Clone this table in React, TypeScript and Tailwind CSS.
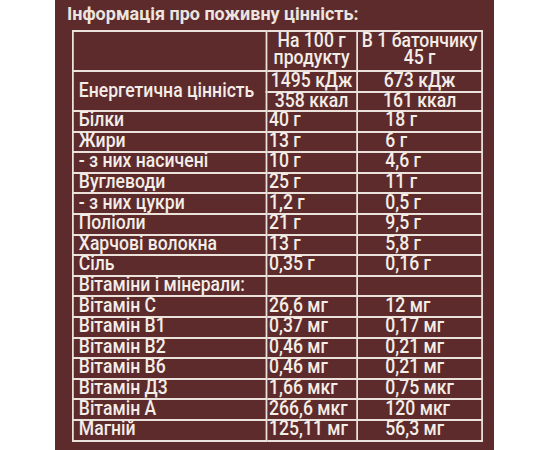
const ROWS: [string, string, string][] = [
  ['Білки', '40 г', '18 г'],
  ['Жири', '13 г', '6 г'],
  ['- з них насичені', '10 г', '4,6 г'],
  ['Вуглеводи', '25 г', '11 г'],
  ['- з них цукри', '1,2 г', '0,5 г'],
  ['Поліоли', '21 г', '9,5 г'],
  ['Харчові волокна', '13 г', '5,8 г'],
  ['Сіль', '0,35 г', '0,16 г'],
  ['Вітаміни і мінерали:', '', ''],
  ['Вітамін С', '26,6 мг', '12 мг'],
  ['Вітамін В1', '0,37 мг', '0,17 мг'],
  ['Вітамін В2', '0,46 мг', '0,21 мг'],
  ['Вітамін В6', '0,46 мг', '0,21 мг'],
  ['Вітамін Д3', '1,66 мкг', '0,75 мкг'],
  ['Вітамін А', '266,6 мкг', '120 мкг'],
  ['Магній', '125,11 мг', '56,3 мг'],
]

// table is laid out wide, then squeezed horizontally to get the condensed look
const cell = 'border-2 border-[#ebe2dc] p-0 whitespace-nowrap'

export default function App() {
  return (
    <div className="h-[450px] w-[550px] overflow-hidden bg-white">
      <div
        className="ml-[55px] h-[450px] w-[439px] bg-[#5d2b2c] text-[#f4ede8]"
        style={{ fontFamily: 'Roboto, "Noto Sans", sans-serif' }}
      >
        <div className="h-[30px] pl-[12px] text-[18px] font-bold leading-[28px] text-[#ece4df]">
          Інформація про поживну цінність:
        </div>
        <table className="ml-[17px] w-[465px] origin-left scale-x-[0.88] table-fixed border-collapse text-[20px] font-medium leading-[15px]">
          <colgroup>
            <col className="w-[219.5px]" />
            <col className="w-[103.5px]" />
            <col className="w-[142px]" />
          </colgroup>
          <tbody>
            <tr className="h-[40px]">
              <td className={cell}></td>
              <td className={`${cell} text-center align-top leading-[16.5px]`}>
                На 100 г
                <br />
                продукту
              </td>
              <td className={`${cell} text-center align-top leading-[16.5px]`}>
                В 1 батончику
                <br />
                45 г
              </td>
            </tr>
            <tr className="h-[21px]">
              <td rowSpan={2} className={`${cell} pb-[2px] pl-[5.7px] align-middle`}>
                Енергетична цінність
              </td>
              <td className={`${cell} pb-[3px] text-center align-middle`}>1495 кДж</td>
              <td className={`${cell} pb-[3px] text-center align-middle`}>673 кДж</td>
            </tr>
            <tr className="h-[19px]">
              <td className={`${cell} pb-[2px] text-center align-middle`}>358 ккал</td>
              <td className={`${cell} pb-[2px] text-center align-middle`}>161 ккал</td>
            </tr>
            {ROWS.map(([name, per100, perBar]) => (
              <tr key={name} className="h-[20.6px]">
                <td className={`${cell} pb-[3px] pl-[5.7px] align-middle`}>{name}</td>
                <td className={`${cell} pb-[3px] pl-[2.3px] align-middle`}>{per100}</td>
                <td className={`${cell} pb-[3px] pl-[31px] align-middle`}>{perBar}</td>
              </tr>
            ))}
          </tbody>
        </table>
      </div>
    </div>
  )
}
